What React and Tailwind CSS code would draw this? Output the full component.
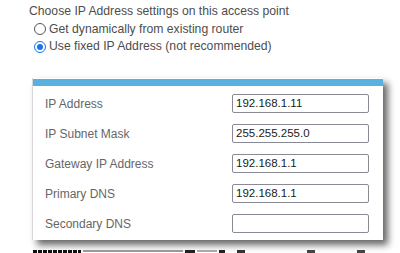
export default function App() {
  const rows = [
    ["IP Address", "192.168.1.11"],
    ["IP Subnet Mask", "255.255.255.0"],
    ["Gateway IP Address", "192.168.1.1"],
    ["Primary DNS", "192.168.1.1"],
    ["Secondary DNS", ""],
  ];
  const sans = { fontFamily: '"Liberation Sans", Arial, sans-serif' };
  return (
    <div className="w-[400px] h-[253px] overflow-hidden bg-white flex flex-col" style={sans}>
      <div className="pl-[29px] pt-[3px] text-[12.2px] leading-[17.5px] text-[#4d4d4d]">
        <div>Choose IP Address settings on this access point</div>
        <div className="flex items-center pl-[5px] gap-[3px]">
          <span className="w-[12px] h-[12px] rounded-full border border-[#555] bg-white shrink-0" />
          <span>Get dynamically from existing router</span>
        </div>
        <div className="flex items-center pl-[5px] gap-[3px]">
          <span className="w-[12px] h-[12px] rounded-full border-[1.5px] border-[#1a73e8] bg-white shrink-0 flex items-center justify-center">
            <span className="w-[6px] h-[6px] rounded-full bg-[#1a73e8]" />
          </span>
          <span>Use fixed IP Address (not recommended)</span>
        </div>
      </div>
      <div className="ml-[32px] mt-[22px] w-[351px] h-[162px] bg-white border-l border-[#d8d8d8] shadow-[5px_5px_7px_rgba(0,0,0,0.6)] flex flex-col shrink-0">
        <div className="h-[7px] bg-[#5ab0de] mt-[1px]" />
        <div className="pt-[3px] flex flex-col">
          {rows.map(([label, value]) => (
            <div key={label} className="h-[30px] flex items-center">
              <div className="w-[199px] pl-[12px] text-[12px] text-[#666]">{label}</div>
              <div className="w-[137px] h-[19px] border border-[#8a8a95] rounded-[2px] flex items-center pl-[3px] text-[11.5px] text-[#1a1a1a]">
                {value}
              </div>
            </div>
          ))}
        </div>
      </div>
      <div className="mt-[8px] ml-[33px] flex items-start gap-[2px] h-[8px]">
        <div className="w-[48px] h-[6px] mt-[2px] bg-[repeating-linear-gradient(90deg,#111_0,#111_4px,#fff_4px,#fff_5px)]" />
        <div className="w-[100px] h-[2px] mt-[2px] bg-[#999]" />
        <div className="w-[10px] h-[6px] mt-[2px] bg-[#222]" />
        <div className="w-[20px] h-[2px] mt-[2px] bg-[#aaa]" />
        <div className="w-[6px] h-[6px] mt-[2px] bg-[#222]" />
        <div className="w-[8px] h-[6px] mt-[2px] ml-[10px] bg-[#333]" />
        <div className="w-[8px] h-[6px] mt-[2px] ml-[60px] bg-[#444]" />
        <div className="w-[8px] h-[6px] mt-[2px] ml-[40px] bg-[#444]" />
      </div>
    </div>
  );
}
